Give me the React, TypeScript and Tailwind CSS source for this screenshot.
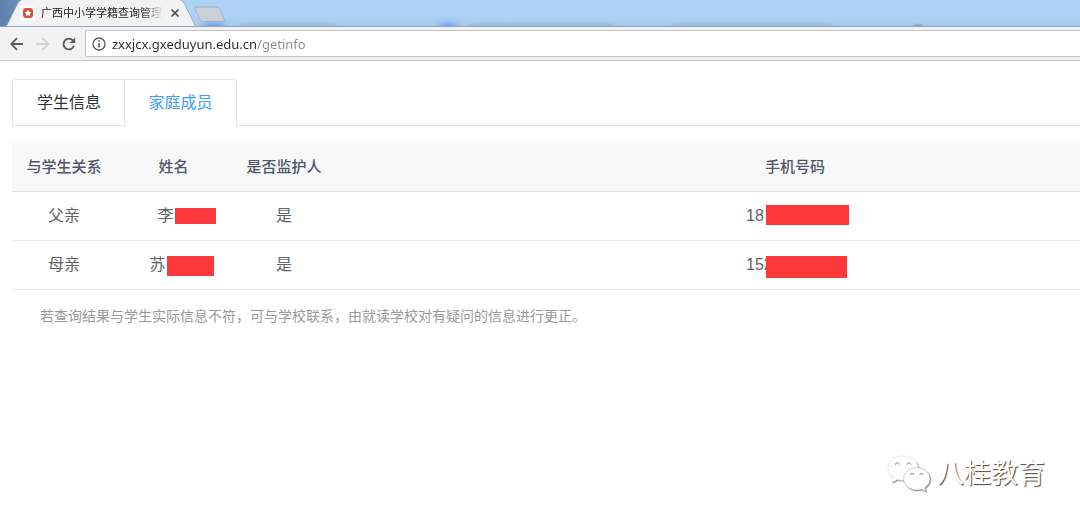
import { useState } from "react";
import { clsx } from "clsx";

interface Member {
  relation: string;
  name: string;
  nameWidth: string;
  nameMask: string;
  guardian: string;
  phone: string;
  phoneMask: string;
}

const members: Member[] = [
  {
    relation: "父亲",
    name: "李",
    nameWidth: "w-8",
    nameMask: "left-[17px] top-1 h-4 w-[41px]",
    guardian: "是",
    phone: "18",
    phoneMask: "left-5 top-px h-5 w-[83px]",
  },
  {
    relation: "母亲",
    name: "苏",
    nameWidth: "w-12",
    nameMask: "left-[17px] top-[3px] h-5 w-[47px]",
    guardian: "是",
    phone: "152",
    phoneMask: "left-5 top-[3px] h-[22px] w-[81px]",
  },
];

const tabs = ["学生信息", "家庭成员"];

// Value with its tail hidden behind a red block
function Masked({ text, width, mask }: { text: string; width: string; mask: string }) {
  return (
    <span className={clsx("relative inline-block text-left align-top", width)}>
      {text}
      <span className={clsx("absolute bg-[#fd3838]", mask)} />
    </span>
  );
}

function TabStrip() {
  return (
    <div className="relative flex h-[27px] items-end overflow-hidden border-b border-[#8aa5c8] bg-linear-to-b from-[#aed2f5] from-60% to-[#a6c8ee]">
      <div className="absolute left-0 top-0 h-full w-6 bg-linear-to-r from-[#6280af] to-[#7391bd]" />
      <div className="absolute left-[204px] top-6 h-2 w-5 bg-[#5e98e2] blur-[3px]" />
      <div className="absolute left-[440px] top-6 h-2 w-4 bg-[#5e98e2] blur-[3px]" />
      <div className="absolute left-[240px] top-[25px] h-1 w-24 bg-[#8fb0d6] blur-[2px]" />
      <div className="absolute left-[470px] top-[25px] h-1 w-36 bg-[#8fb0d6] blur-[2px]" />
      <div className="absolute left-[672px] top-[25px] h-1 w-40 bg-[#8fb0d6] blur-[2px]" />
      <div className="absolute left-[914px] top-[25px] h-1 w-2 bg-[#6787b0] blur-[1px]" />

      <div className="relative ml-1.5 flex h-[26px] w-[190px] shrink-0 items-center pl-3.5 before:absolute before:inset-y-0 before:left-0 before:w-1/2 before:origin-bottom before:-skew-x-[26deg] before:rounded-tl-sm before:border-l before:border-[#8296b5] before:bg-[#f2f2f2] after:absolute after:inset-y-0 after:right-0 after:w-24 after:origin-bottom after:skew-x-[26deg] after:rounded-tr-sm after:border-r after:border-[#8296b5] after:bg-[#f2f2f2]">
        <span className="relative z-10 flex size-[15px] items-center justify-center bg-white">
          <svg viewBox="0 0 10 10" className="size-[10px]">
            <rect width="10" height="10" rx="3" fill="#dd4a35" />
            <path
              d="M5 1.600 6.100 3.800 8.400 4.200 6.800 5.900 7.100 8.200 5 7.100 2.900 8.200 3.200 5.900 1.600 4.200 3.900 3.800Z"
              fill="#fff"
            />
          </svg>
        </span>
        <span className="relative z-10 ml-1.5 w-[122px] whitespace-nowrap text-[11px] leading-4 text-[#222] [mask-image:linear-gradient(to_right,black_82%,transparent)]">
          广西中小学学籍查询管理
        </span>
        <button type="button" aria-label="Close tab" className="relative z-10 ml-2 size-2">
          <svg viewBox="0 0 8 8" className="size-2" stroke="#555" strokeWidth="1.6">
            <path d="M.5.5 7.5 7.5M7.5.5.5 7.5" />
          </svg>
        </button>
      </div>
      <button type="button" aria-label="New tab" className="relative mb-[3px] -ml-1">
        <svg viewBox="0 0 34 17" className="h-[17px] w-[34px]">
          <path
            d="M4 1H25Q27 1 28 3L32.500 14Q33 15.500 31 15.500H11Q9 15.500 8 13.500L3 3Q2.200 1 4 1Z"
            fill="#c9d0d8"
            stroke="#9db3ce"
          />
        </svg>
      </button>
    </div>
  );
}

function Toolbar() {
  return (
    <div className="flex h-[34px] items-center border-b border-[#c6c6c8] bg-[#f2f2f2] pl-2.5">
      <button type="button" aria-label="Back">
        <svg viewBox="0 0 14 14" className="size-3.5" fill="none" stroke="#5a5a5a" strokeWidth="1.800">
          <path d="M13 7H1.500M7 1.200 1.200 7 7 12.800" />
        </svg>
      </button>
      <button type="button" aria-label="Forward" className="ml-3" disabled>
        <svg viewBox="0 0 14 14" className="size-3.5" fill="none" stroke="#d2d2d2" strokeWidth="1.800">
          <path d="M0 7H12.500M6.500 1.200 12.300 7 6.500 12.800" />
        </svg>
      </button>
      <button type="button" aria-label="Reload" className="ml-3">
        <svg viewBox="0 0 14 14" className="size-3.5" fill="none" stroke="#5a5a5a" strokeWidth="1.900">
          <path d="M11 3.500A5.400 5.400 0 1 0 12 8.700" />
          <path d="M13.200.5V6H7.700Z" fill="#5a5a5a" stroke="none" />
        </svg>
      </button>
      <div className="ml-[9px] flex h-[27px] flex-1 items-center rounded-l-xs border border-r-0 border-[#c4c4c6] bg-white pl-1.5">
        <svg viewBox="0 0 14 14" className="size-3.5 shrink-0" fill="none" stroke="#5a5a5a" strokeWidth="1.300">
          <circle cx="7" cy="7" r="6" />
          <path d="M7 6V10.500M7 3.300V4.800" strokeWidth="1.600" />
        </svg>
        <input
          type="text"
          aria-label="Address"
          defaultValue="zxxjcx.gxeduyun.edu.cn/getinfo"
          className="ml-1.5 h-5 min-w-0 flex-1 bg-linear-to-r from-[#2b2b2b] from-[144px] to-[#8c8c8c] to-[144px] bg-clip-text font-['Noto_Sans',sans-serif] text-[13px] text-transparent outline-none"
        />
      </div>
    </div>
  );
}

export default function App() {
  const [active, setActive] = useState("家庭成员");

  return (
    <div className="relative min-h-screen overflow-hidden bg-white font-['Liberation_Sans','Noto_Sans_CJK_SC',sans-serif]">
      <TabStrip />
      <Toolbar />

      <main className="pl-3 pt-[18px]">
        <div role="tablist" className="flex">
          {tabs.map((tab, i) => (
            <button
              key={tab}
              type="button"
              role="tab"
              aria-selected={tab === active}
              onClick={() => setActive(tab)}
              className={clsx(
                "h-[47px] w-[113px] border-t border-[#dfe4ed] text-base",
                i === 0 ? "rounded-tl border-l" : "-ml-px rounded-tr border-x",
                tab === active ? "text-[#409eff]" : "border-b text-[#303133]"
              )}
            >
              {tab}
            </button>
          ))}
          <div className="flex-1 border-b border-[#dfe4ed]" />
        </div>

        <table className="mt-[17px] w-full table-fixed border-collapse text-center text-base text-[#606266]">
          <colgroup>
            <col className="w-[104px]" />
            <col className="w-[115px]" />
            <col className="w-[106px]" />
            <col />
          </colgroup>
          <thead>
            <tr className="h-12 border-b border-[#e2e4e8] bg-[#f8f8f8] text-[15px] text-[#4e566a]">
              <th className="font-medium">与学生关系</th>
              <th className="font-medium">姓名</th>
              <th className="font-medium">是否监护人</th>
              <th className="pl-[173px] font-medium">手机号码</th>
            </tr>
          </thead>
          <tbody>
            {members.map((m) => (
              <tr key={m.relation} className="h-[49px] border-b border-[#e4e9f2]">
                <td>{m.relation}</td>
                <td>
                  <Masked text={m.name} width={m.nameWidth} mask={m.nameMask} />
                </td>
                <td>{m.guardian}</td>
                <td className="pl-[173px]">
                  <Masked text={m.phone} width="w-[98px]" mask={m.phoneMask} />
                </td>
              </tr>
            ))}
          </tbody>
        </table>

        <p className="pl-7 pt-4 text-sm text-[#999]">
          若查询结果与学生实际信息不符，可与学校联系，由就读学校对有疑问的信息进行更正。
        </p>
      </main>

      {/* Watermark */}
      <div className="absolute bottom-7 right-[35px] flex items-center gap-1.5 text-[27px] leading-10 text-white [text-shadow:1px_1px_1px_#444]">
        <svg
          viewBox="0 0 45 39"
          className="h-[38px] w-11 drop-shadow-[1px_1px_0px_#999]"
          fill="#fff"
          stroke="#ddd"
          strokeWidth=".6"
        >
          <path d="M16 1C7.500 1 1 6.500 1 13.500c0 4 2 7.500 5.500 9.800L5 28l5.500-2.800c2 .6 4 .8 6.500.7 9-.3 15-5.500 15-12.400S25 1 16 1Z" />
          <path
            d="M30.500 13C23 13 17 18 17 24.500S23 36 30.500 36c2 0 3.500-.3 5-.8L40 37.500l-1.300-4C42 31.500 44 28.500 44 24.500 44 18 38 13 30.500 13Z"
            stroke="#aaa"
          />
          <path
            d="M8.500 10a2 2 0 0 1 4 0M20.500 10a2 2 0 0 1 4 0M24 20.500a1.700 1.700 0 0 1 3.400 0M33.500 20.500a1.700 1.700 0 0 1 3.400 0"
            fill="none"
            stroke="#888"
            strokeWidth="1"
          />
        </svg>
        八桂教育
      </div>
    </div>
  );
}
